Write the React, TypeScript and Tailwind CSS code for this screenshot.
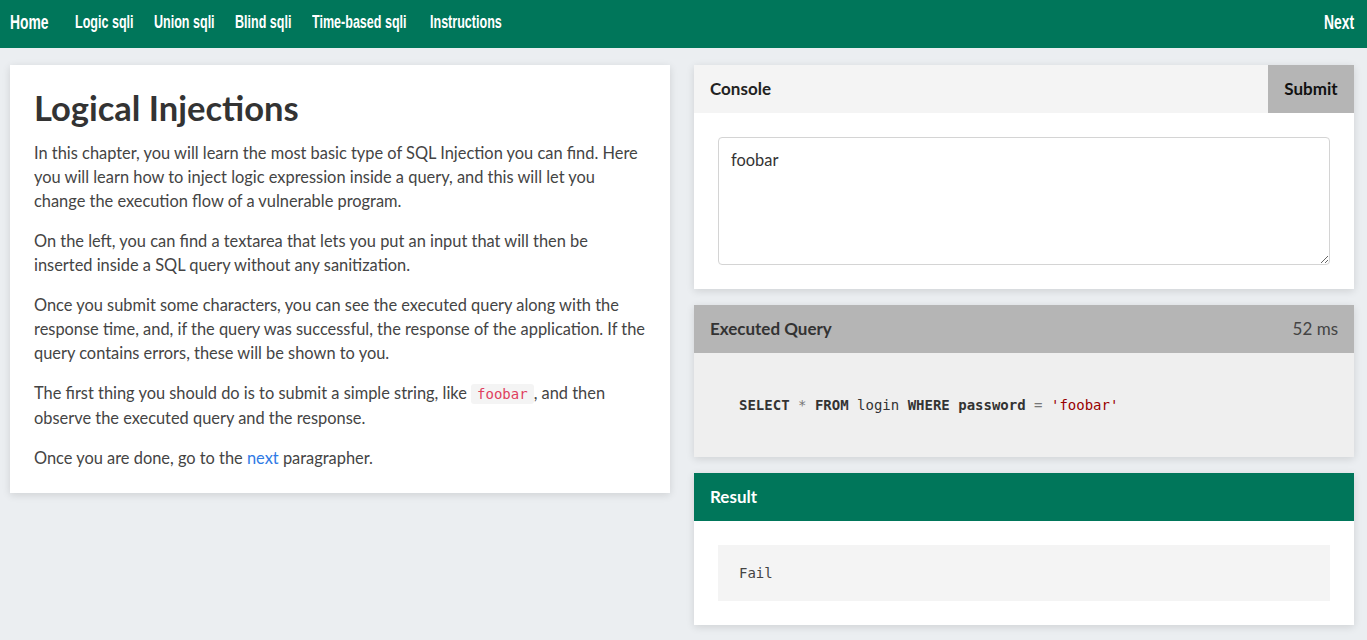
import React from 'react';

// nav font is a condensed face in the original; squeeze Liberation Sans into fixed boxes
const navItems: [string, number][] = [
  ['Logic sqli', 55],
  ['Union sqli', 57],
  ['Blind sqli', 53],
  ['Time-based sqli', 94],
  ['Instructions', 70],
];

function NavLink({ label, width, big = false }: { label: string; width: number; big?: boolean }) {
  return (
    <a className="relative block h-6" style={{ width }}>
      <span
        className={`absolute top-[-2px] left-0 origin-left scale-x-[0.66] whitespace-nowrap font-bold ${big ? 'text-[21px] leading-6' : 'text-[19px] leading-6'}`}
      >
        {label}
      </span>
    </a>
  );
}

function Card({ children, className = '' }: { children: React.ReactNode; className?: string }) {
  return <div className={`bg-white shadow-[0_2px_8px_rgba(0,0,0,0.12)] ${className}`}>{children}</div>;
}

export default function App() {
  const sans = { fontFamily: 'Lato, "Open Sans", sans-serif' };
  const nav = { fontFamily: '"Liberation Sans", Arial, sans-serif' };
  const mono = { fontFamily: '"DejaVu Sans Mono", "Liberation Mono", monospace' };

  return (
    <div className="min-h-[640px] bg-[#ebeef1] text-[#333]" style={sans}>
      <nav className="flex h-12 items-center justify-between bg-[#00765a] px-[10px] text-white" style={nav}>
        <div className="flex items-center gap-6">
          <NavLink label="Home" width={41} big />
          {navItems.map(([item, w]) => (
            <NavLink key={item} label={item} width={w} />
          ))}
        </div>
        <NavLink label="Next" width={33} big />
      </nav>

      <div className="flex gap-6 px-[10px] pt-[17px]">
        <Card className="w-[660px] self-start px-6 pt-[23px] pb-[23px]">
          <h1 className="mb-[13px] text-[34.5px] leading-10 font-bold text-[#333]">Logical Injections</h1>
          <div className="space-y-4 text-[16.4px] leading-6 text-[#444]">
            <p>
              In this chapter, you will learn the most basic type of SQL Injection you can find. Here you will learn how
              to inject logic expression inside a query, and this will let you change the execution flow of a vulnerable
              program.
            </p>
            <p>
              On the left, you can find a textarea that lets you put an input that will then be inserted inside a SQL
              query without any sanitization.
            </p>
            <p>
              Once you submit some characters, you can see the executed query along with the response time, and, if
              the query was successful, the response of the application. If the query contains errors, these will be
              shown to you.
            </p>
            <p>
              The first thing you should do is to submit a simple string, like{' '}
              <code className="rounded-[3px] bg-[#f4f4f4] px-[6px] py-[2px] text-[14px] text-[#e0405e]" style={mono}>
                foobar
              </code>
              , and then observe the executed query and the response.
            </p>
            <p>
              Once you are done, go to the <a className="text-[#2f7ae5]">next</a> paragrapher.
            </p>
          </div>
        </Card>

        <div className="flex w-[660px] flex-col gap-4">
          <Card>
            <div className="flex h-12 items-center justify-between bg-[#f4f4f4]">
              <span className="pl-4 text-[17px] font-bold text-[#222]">Console</span>
              <button className="h-12 w-[86px] bg-[#b5b5b5] text-[17px] font-bold text-[#111]">Submit</button>
            </div>
            <div className="px-6 py-6">
              <textarea
                defaultValue="foobar"
                className="block h-[128px] w-full resize-y rounded border border-[#d4d4d4] px-3 py-[10px] text-[16.4px] text-[#333] outline-none"
                style={sans}
              />
            </div>
          </Card>

          <Card>
            <div className="flex h-12 items-center justify-between bg-[#b5b5b5] px-4 text-[17px]">
              <span className="font-bold text-[#333]">Executed Query</span>
              <span className="text-[#444]">52 ms</span>
            </div>
            <div className="flex h-[104px] items-center bg-[#efefef] px-[45px] text-[14px]" style={mono}>
              <span className="text-[#333]">
                <b>SELECT</b> <span className="text-[#777]">*</span> <b>FROM</b> login <b>WHERE</b> <b>password</b>{' '}
                <span className="text-[#777]">=</span> <span className="text-[#990000]">'foobar'</span>
              </span>
            </div>
          </Card>

          <Card>
            <div className="flex h-12 items-center bg-[#00765a] px-4 text-[17px] font-bold text-white">Result</div>
            <div className="px-6 py-6">
              <pre className="flex h-14 items-center bg-[#f4f4f4] px-[21px] text-[14px] text-[#444]" style={mono}>
                Fail
              </pre>
            </div>
          </Card>
        </div>
      </div>
    </div>
  );
}
